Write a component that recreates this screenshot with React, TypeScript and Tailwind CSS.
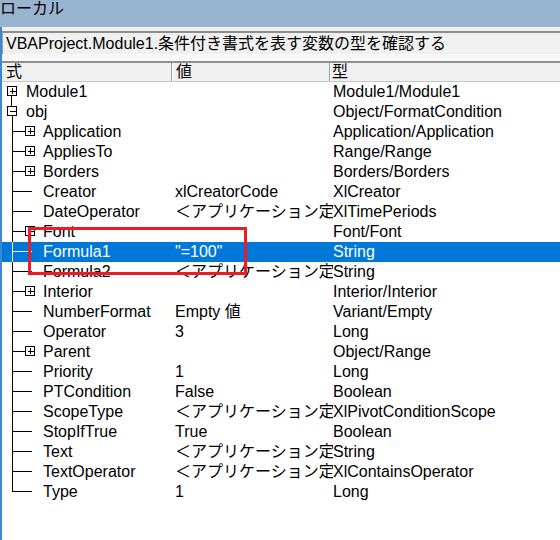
import React from "react"

type Row = {
  name: string
  value?: string
  type: string
  level: 0 | 1
  box?: "plus" | "minus"
  selected?: boolean
  last?: boolean
}

const APP_DEF = "＜アプリケーション定義済み＞"

const rows: Row[] = [
  { name: "Module1", type: "Module1/Module1", level: 0, box: "plus" },
  { name: "obj", type: "Object/FormatCondition", level: 0, box: "minus" },
  { name: "Application", type: "Application/Application", level: 1, box: "plus" },
  { name: "AppliesTo", type: "Range/Range", level: 1, box: "plus" },
  { name: "Borders", type: "Borders/Borders", level: 1, box: "plus" },
  { name: "Creator", value: "xlCreatorCode", type: "XlCreator", level: 1 },
  { name: "DateOperator", value: APP_DEF, type: "XlTimePeriods", level: 1 },
  { name: "Font", type: "Font/Font", level: 1, box: "plus" },
  { name: "Formula1", value: '"=100"', type: "String", level: 1, selected: true },
  { name: "Formula2", value: APP_DEF, type: "String", level: 1 },
  { name: "Interior", type: "Interior/Interior", level: 1, box: "plus" },
  { name: "NumberFormat", value: "Empty 値", type: "Variant/Empty", level: 1 },
  { name: "Operator", value: "3", type: "Long", level: 1 },
  { name: "Parent", type: "Object/Range", level: 1, box: "plus" },
  { name: "Priority", value: "1", type: "Long", level: 1 },
  { name: "PTCondition", value: "False", type: "Boolean", level: 1 },
  { name: "ScopeType", value: APP_DEF, type: "XlPivotConditionScope", level: 1 },
  { name: "StopIfTrue", value: "True", type: "Boolean", level: 1 },
  { name: "Text", value: APP_DEF, type: "String", level: 1 },
  { name: "TextOperator", value: APP_DEF, type: "XlContainsOperator", level: 1 },
  { name: "Type", value: "1", type: "Long", level: 1, last: true },
]

// tree connector + expand box for one row
function TreeGlyph({ row, index }: { row: Row; index: number }) {
  const c = row.selected ? "#ffffff" : "#000000"
  const boxX = row.level === 0 ? 5.5 : 23.5
  const bx = boxX + 4
  return (
    <svg width="44" height="20" className="shrink-0" shapeRendering="crispEdges">
      {row.level === 0 && index === 0 && <line x1="9.5" y1="14" x2="9.5" y2="20" stroke={c} />}
      {row.level === 0 && index === 1 && (
        <>
          <line x1="9.5" y1="0" x2="9.5" y2="5" stroke={c} />
          <line x1="10.5" y1="14" x2="10.5" y2="20" stroke={c} />
        </>
      )}
      {row.level === 1 && (
        <>
          <line x1="10.5" y1="0" x2="10.5" y2={row.last ? 10 : 20} stroke={c} />
          <line x1="10.5" y1="9.5" x2={row.box ? 23.5 : 30} y2="9.5" stroke={c} />
        </>
      )}
      {row.box && (
        <>
          <rect x={boxX} y="4.5" width="9" height="9" fill={row.selected ? "none" : "#fff"} stroke={c} />
          <line x1={bx - 2} y1="9" x2={bx + 4} y2="9" stroke={c} />
          {row.box === "plus" && <line x1={bx + 1} y1="6" x2={bx + 1} y2="12" stroke={c} />}
        </>
      )}
    </svg>
  )
}

export default function App() {
  return (
    <div
      className="w-[560px] h-[540px] overflow-hidden bg-white text-[16px] text-black"
      style={{ fontFamily: '"Liberation Sans", "Noto Sans CJK JP", sans-serif' }}
    >
      {/* Title */}
      <div className="h-[27px] bg-[#99b4d1] leading-[18px] whitespace-nowrap">ローカル</div>

      <div className="relative h-[513px] border-l-2 border-[#3d86d4] flex flex-col">
        <div className="h-[4px] bg-[#f0f0f0]" />

        {/* Context box */}
        <div className="h-[24px] bg-[#f0f0f0] border-t-2 border-t-[#8e8e8e] border-l border-l-[#a0a0a0] border-b border-b-white pl-[3px] leading-[21px] whitespace-nowrap">
          VBAProject.Module1.条件付き書式を表す変数の型を確認する
        </div>

        <div className="h-[6px] bg-[#f7f7f7]" />

        {/* Column header */}
        <div className="h-[21px] flex bg-[#f0f0f0] border-t-2 border-t-[#8e8e8e] border-b border-b-[#c8c8c8] leading-[18px]">
          <div className="w-[170px] pl-[4px] border-r border-r-[#a0a0a0]">式</div>
          <div className="w-[158px] pl-[3px] border-l border-l-white border-r border-r-[#a0a0a0]">値</div>
          <div className="flex-1 pl-[1px] border-l border-l-white">型</div>
        </div>

        {/* Rows */}
        <div className="flex-1 bg-white">
          {rows.map((r, i) => (
            <div
              key={r.name}
              className={
                "h-[20px] flex items-center leading-[20px] whitespace-nowrap " +
                (r.selected ? "bg-[#0078d7] text-white" : "")
              }
            >
              <div className="w-[173px] flex items-center shrink-0">
                <TreeGlyph row={r} index={i} />
                <span className={r.level === 0 ? "-ml-[20px]" : "-ml-[3px]"}>{r.name}</span>
              </div>
              <div className="w-[158px] shrink-0 overflow-hidden">{r.value ?? ""}</div>
              <div className="flex-1">{r.type}</div>
            </div>
          ))}
        </div>

        {/* red highlight annotation */}
        <div className="absolute left-[26px] top-[200px] w-[219px] h-[48px] border-[3px] border-[#ed1c24]" />
      </div>
    </div>
  )
}
